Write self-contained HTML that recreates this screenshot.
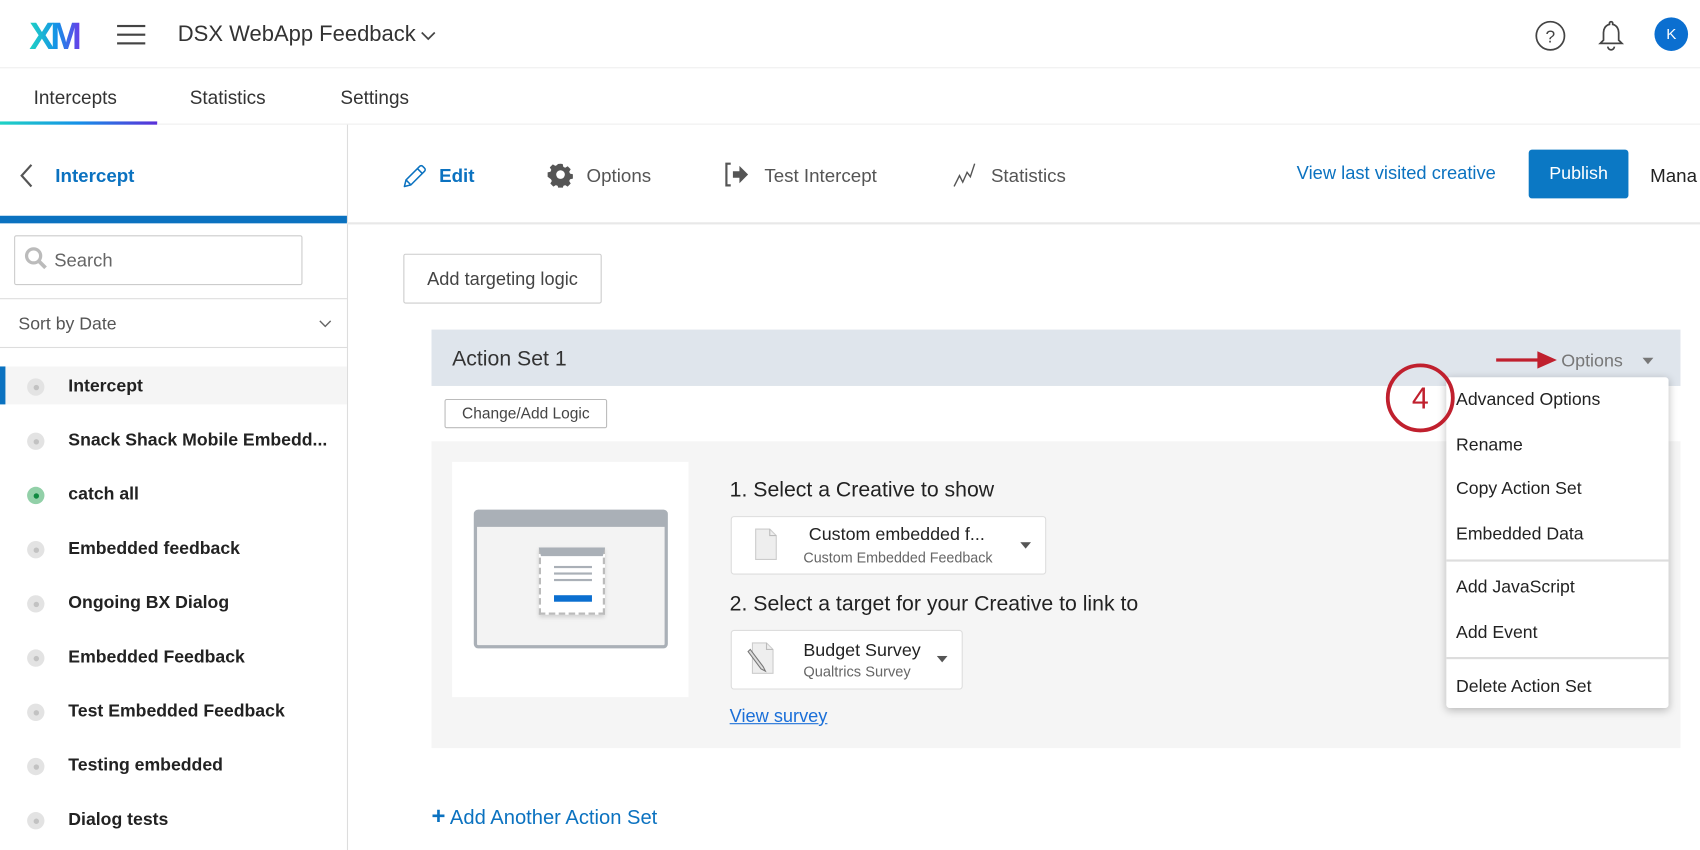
<!DOCTYPE html>
<html><head><meta charset="utf-8">
<style>
*{box-sizing:border-box;margin:0;padding:0}
html,body{width:1700px;height:850px;overflow:hidden;background:#fff}
#s{position:absolute;left:0;top:0;width:1568px;height:784px;transform:scale(1.08418);transform-origin:0 0;font-family:"Liberation Sans",sans-serif;color:#222}
.a{position:absolute;white-space:nowrap}
.line{position:absolute;background:#e3e3e3}
.it{position:absolute;left:63px;font-size:16.3px;font-weight:bold;color:#222;transform:translateY(-48%)}
.dot{position:absolute;left:25px;width:16px;height:16px;border-radius:50%;background:#e3e3e3;transform:translateY(-50%)}
.dot:after{content:"";position:absolute;left:5.5px;top:5.5px;width:5px;height:5px;border-radius:50%;background:#c2c2c2}
.mi{position:absolute;left:9px;font-size:16.3px;color:#222;transform:translateY(-45%)}
</style></head><body><div id="s">
<!-- top bar -->
<svg class="a" style="left:27px;top:16px" width="56" height="32" viewBox="0 0 56 32"><defs><linearGradient id="g" x1="0" x2="1"><stop offset="0" stop-color="#1fd3c4"/><stop offset=".55" stop-color="#1590e8"/><stop offset="1" stop-color="#6a3de8"/></linearGradient></defs><text x="0" y="29" font-family="Liberation Sans" font-weight="bold" font-size="35" fill="url(#g)" letter-spacing="-4" transform="scale(1,1)">XM</text></svg>
<div class="a" style="left:108px;top:23px;width:26px;height:2px;background:#444;box-shadow:0 8px 0 #444,0 16px 0 #444"></div>
<div class="a" style="left:164px;top:21px;font-size:20.3px;color:#333">DSX WebApp Feedback</div>
<svg class="a" style="left:388px;top:28px" width="14" height="10"><path d="M1 2l6 6 6-6" stroke="#444" stroke-width="1.6" fill="none"/></svg>
<svg class="a" style="left:1415px;top:18px" width="30" height="30"><circle cx="15" cy="15" r="13" stroke="#444" stroke-width="1.6" fill="none"/><text x="15" y="21" text-anchor="middle" font-size="16" fill="#444" font-family="Liberation Sans">?</text></svg>
<svg class="a" style="left:1473px;top:17px" width="26" height="30"><path d="M13 3a1.5 1.5 0 0 1 1.5 1.5v1C18.5 6.5 20 10 20 13v7l3 3H3l3-3v-7c0-3 1.5-6.5 5.5-7.5v-1A1.5 1.5 0 0 1 13 3z" stroke="#444" stroke-width="1.6" fill="none"/><path d="M10 26a3 3 0 0 0 6 0" stroke="#444" stroke-width="1.6" fill="none"/></svg>
<div class="a" style="left:1526px;top:16px;width:31px;height:31px;border-radius:50%;background:#0b6fd0;color:#fff;font-size:14px;text-align:center;line-height:31px">K</div>
<div class="line" style="left:0;top:62px;width:1568px;height:1px;background:#eee"></div>
<!-- tabs -->
<div class="a" style="left:31px;top:80px;font-size:17.5px;color:#333">Intercepts</div>
<div class="a" style="left:175px;top:80px;font-size:17.5px;color:#333">Statistics</div>
<div class="a" style="left:314px;top:80px;font-size:17.5px;color:#333">Settings</div>
<div class="a" style="left:0;top:112px;width:145px;height:3px;background:linear-gradient(90deg,#1fd3c4,#1590e8,#5b2fd8)"></div>
<div class="line" style="left:145px;top:114px;width:1423px;height:1px;background:#eee"></div>
<!-- sidebar -->
<div class="line" style="left:320px;top:115px;width:1px;height:669px;background:#ddd"></div>
<svg class="a" style="left:16px;top:150px" width="16" height="24"><path d="M13 2L4 12l9 10" stroke="#555" stroke-width="2" fill="none"/></svg>
<div class="a" style="left:51px;top:152px;font-size:17.3px;font-weight:bold;color:#0b72c0">Intercept</div>
<div class="a" style="left:0;top:199px;width:320px;height:7px;background:#0b72c0"></div>
<div class="line" style="left:320px;top:205px;width:1248px;height:2px;background:#e8e8e8"></div>
<div class="a" style="left:13px;top:217px;width:266px;height:46px;border:1px solid #ccc;border-radius:2px"></div>
<svg class="a" style="left:21px;top:226px" width="26" height="26"><circle cx="10" cy="10" r="6.5" stroke="#bbb" stroke-width="3" fill="none"/><path d="M15 15l6 6" stroke="#bbb" stroke-width="3.5"/></svg>
<div class="a" style="left:50px;top:231px;font-size:17px;color:#666">Search</div>
<div class="line" style="left:0;top:275px;width:320px;height:1px;background:#ddd"></div>
<div class="a" style="left:17px;top:290px;font-size:16.3px;color:#555">Sort by Date</div>
<svg class="a" style="left:294px;top:295px" width="12" height="8"><path d="M1 1l5 5 5-5" stroke="#666" stroke-width="1.3" fill="none"/></svg>
<div class="line" style="left:0;top:320px;width:320px;height:1px;background:#ddd"></div>
<div class="a" style="left:0;top:338px;width:320px;height:35px;background:#f5f5f5"></div>
<div class="a" style="left:0;top:338px;width:5px;height:35px;background:#0b72c0"></div>
<div class="dot" style="top:357px"></div><div class="it" style="top:356px">Intercept</div>
<div class="dot" style="top:407px"></div><div class="it" style="top:406px">Snack Shack Mobile Embedd...</div>
<div class="dot" style="top:457px;background:#92d0a8"></div><div class="a" style="left:30.5px;top:454.5px;width:5px;height:5px;border-radius:50%;background:#0f8a40"></div><div class="it" style="top:456px">catch all</div>
<div class="dot" style="top:507px"></div><div class="it" style="top:506px">Embedded feedback</div>
<div class="dot" style="top:557px"></div><div class="it" style="top:556px">Ongoing BX Dialog</div>
<div class="dot" style="top:607px"></div><div class="it" style="top:606px">Embedded Feedback</div>
<div class="dot" style="top:657px"></div><div class="it" style="top:656px">Test Embedded Feedback</div>
<div class="dot" style="top:707px"></div><div class="it" style="top:706px">Testing embedded</div>
<div class="dot" style="top:757px"></div><div class="it" style="top:756px">Dialog tests</div>
<!-- main header -->
<svg class="a" style="left:370px;top:149px" width="26" height="26"><path d="M3 23l1.5-6L17 4.5a2 2 0 0 1 3 0l1.5 1.5a2 2 0 0 1 0 3L9 21.5z M15 6.5l4.5 4.5 M4.5 17l4.5 4.5" stroke="#0b72c0" stroke-width="1.4" fill="none" stroke-linejoin="round"/></svg>
<div class="a" style="left:405px;top:152px;font-size:17.3px;font-weight:bold;color:#0b72c0">Edit</div>
<svg class="a" style="left:505px;top:149px" width="24" height="24" viewBox="0 0 24 24"><path d="M12 2l2 .3.6 2.6 1.7.8 2.3-1.4 2.8 2.8-1.4 2.3.8 1.7 2.6.6v4l-2.6.6-.8 1.7 1.4 2.3-2.8 2.8-2.3-1.4-1.7.8-.6 2.6h-4l-.6-2.6-1.7-.8-2.3 1.4-2.8-2.8 1.4-2.3-.8-1.7L.1 14V10l2.6-.6.8-1.7-1.4-2.3 2.8-2.8 2.3 1.4 1.7-.8L9.5 2.3z" fill="#555"/><circle cx="12" cy="12" r="4" fill="#fff"/></svg>
<div class="a" style="left:541px;top:152px;font-size:17.3px;color:#555">Options</div>
<svg class="a" style="left:668px;top:149px" width="24" height="24"><path d="M6 2H2v20h4" stroke="#555" stroke-width="2" fill="none"/><path d="M8 9h6V4l8 8-8 8v-5H8z" fill="#555"/></svg>
<div class="a" style="left:705px;top:152px;font-size:17.3px;color:#555">Test Intercept</div>
<svg class="a" style="left:878px;top:148px" width="28" height="26"><path d="M2 24l5-10 3 6 4-9 3 4 4-12" stroke="#555" stroke-width="1.3" fill="none"/></svg>
<div class="a" style="left:914px;top:152px;font-size:17.3px;color:#555">Statistics</div>
<div class="a" style="left:1196px;top:150px;font-size:16.9px;color:#0b72c0">View last visited creative</div>
<div class="a" style="left:1410px;top:138px;width:92px;height:45px;background:#0b78c4;border-radius:3px;color:#fff;font-size:16.5px;text-align:center;line-height:44px">Publish</div>
<div class="a" style="left:1522px;top:152px;font-size:17.3px;color:#222">Mana</div>
<!-- content -->
<div class="a" style="left:372px;top:234px;width:183px;height:46px;border:1px solid #ccc;border-radius:2px;font-size:16.8px;color:#444;text-align:center;line-height:46px">Add targeting logic</div>
<div class="a" style="left:398px;top:304px;width:1152px;height:52px;background:#dfe5ec"></div>
<div class="a" style="left:417px;top:320px;font-size:19.6px;color:#333">Action Set 1</div>
<div class="a" style="left:1440px;top:324px;font-size:16.5px;color:#777">Options</div>
<svg class="a" style="left:1514px;top:329px" width="12" height="8"><path d="M1 1h10L6 7z" fill="#777"/></svg>
<svg class="a" style="left:1378px;top:322px" width="62" height="20"><path d="M2 10h42" stroke="#c0202e" stroke-width="3"/><path d="M40 2l18 8-18 8z" fill="#c0202e"/></svg>
<div class="a" style="left:410px;top:368px;width:150px;height:27px;border:1px solid #bbb;border-radius:2px;font-size:14.3px;color:#444;text-align:center;line-height:26px">Change/Add Logic</div>
<div class="a" style="left:398px;top:407px;width:1152px;height:283px;background:#f5f5f5"></div>
<div class="a" style="left:417px;top:426px;width:218px;height:217px;background:#fff"></div>
<div class="a" style="left:437px;top:470px;width:179px;height:128px;border:3px solid #aab0b7;border-top-width:16px;border-radius:4px;background:#f3f3f3"></div>
<div class="a" style="left:497px;top:505px;width:61px;height:62px;background:#fff;border:2px dashed #bbb;border-top:8px solid #aab0b7;box-shadow:0 2px 4px rgba(0,0,0,.15)"></div>
<div class="a" style="left:511px;top:522px;width:35px;height:2px;background:#aab0b7;box-shadow:0 6px 0 #aab0b7,0 12px 0 #aab0b7"></div>
<div class="a" style="left:511px;top:549px;width:35px;height:6px;background:#0b6fd0"></div>
<div class="a" style="left:673px;top:441px;font-size:19.6px;color:#222">1. Select a Creative to show</div>
<div class="a" style="left:674px;top:476px;width:291px;height:54px;background:#fff;border:1px solid #ddd;border-radius:3px"></div>
<svg class="a" style="left:694px;top:486px" width="26" height="34"><path d="M3 2h13l6 6v22H3z" fill="#eee" stroke="#ccc"/><path d="M16 2v6h6" fill="none" stroke="#bbb"/></svg>
<div class="a" style="left:746px;top:484px;font-size:16.5px;color:#222">Custom embedded f...</div>
<div class="a" style="left:741px;top:507px;font-size:13.2px;color:#666">Custom Embedded Feedback</div>
<svg class="a" style="left:941px;top:500px" width="11" height="7"><path d="M0 0h10L5 6z" fill="#555"/></svg>
<div class="a" style="left:673px;top:546px;font-size:19.6px;color:#222">2. Select a target for your Creative to link to</div>
<div class="a" style="left:674px;top:581px;width:214px;height:55px;background:#fff;border:1px solid #ddd;border-radius:3px"></div>
<svg class="a" style="left:688px;top:591px" width="32" height="36"><path d="M6 2h13l6 6v22H6z" fill="#eee" stroke="#ccc"/><path d="M19 2v6h6" fill="none" stroke="#bbb"/><path d="M4 8l12 16 2 4-4-2L2 10z" fill="#ddd" stroke="#777"/></svg>
<div class="a" style="left:741px;top:591px;font-size:16.5px;color:#222">Budget Survey</div>
<div class="a" style="left:741px;top:612px;font-size:13.5px;color:#666">Qualtrics Survey</div>
<svg class="a" style="left:864px;top:605px" width="11" height="7"><path d="M0 0h10L5 6z" fill="#555"/></svg>
<div class="a" style="left:673px;top:651px;font-size:16.8px;color:#1a6fd8;text-decoration:underline">View survey</div>
<div class="a" style="left:398px;top:743px;font-size:18.6px;color:#0b72c0"><b style="font-size:22px;line-height:0">+</b> Add Another Action Set</div>
<!-- menu -->
<div class="a" style="left:1334px;top:348px;width:205px;height:305px;background:#fff;border-radius:3px;box-shadow:0 2px 8px rgba(0,0,0,.25)">
<div class="mi" style="top:20px">Advanced Options</div>
<div class="mi" style="top:62px">Rename</div>
<div class="mi" style="top:102px">Copy Action Set</div>
<div class="mi" style="top:144px">Embedded Data</div>
<div style="position:absolute;left:0;top:168px;width:205px;height:2px;background:#ddd"></div>
<div class="mi" style="top:193px">Add JavaScript</div>
<div class="mi" style="top:235px">Add Event</div>
<div style="position:absolute;left:0;top:258px;width:205px;height:2px;background:#ddd"></div>
<div class="mi" style="top:285px">Delete Action Set</div>
</div>
<svg class="a" style="left:1277px;top:335px" width="66" height="66"><circle cx="33" cy="32" r="30" fill="none" stroke="#c0202e" stroke-width="3.5"/><text x="33" y="42" text-anchor="middle" font-family="Liberation Sans" font-size="28" fill="#c0202e">4</text></svg>
</div></body></html>
